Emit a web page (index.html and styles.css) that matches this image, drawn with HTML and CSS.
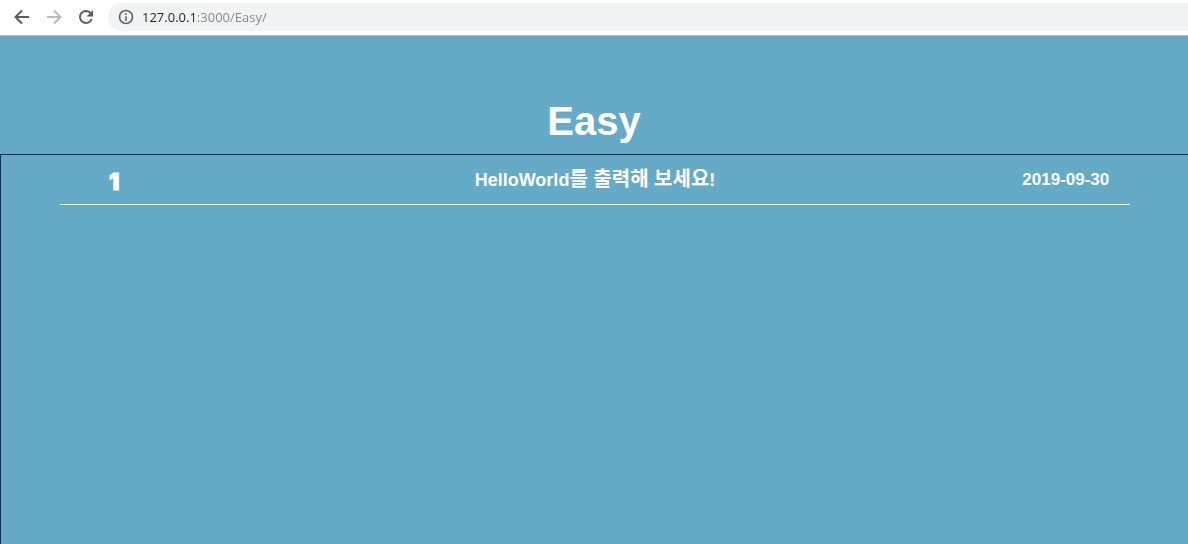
FILE: index.html
```html
<!DOCTYPE html>
<html lang="ko">
<head>
<meta charset="utf-8">
<title>Easy</title>
<link rel="stylesheet" href="styles.css">
</head>
<body>
<header class="toolbar">
  <button class="tool" type="button" aria-label="Back">
    <svg viewBox="0 0 16 16"><path d="M15 8H2M8 1.5 1.5 8 8 14.5"/></svg>
  </button>
  <button class="tool" type="button" aria-label="Forward" disabled>
    <svg viewBox="0 0 16 16"><path d="M1 8h13M8 1.5 14.5 8 8 14.5"/></svg>
  </button>
  <button class="tool" type="button" aria-label="Reload">
    <svg viewBox="0 0 16 16"><path d="M13.6 10A6 6 0 1 1 12.4 3.9L13.5 5"/><path class="solid" d="M15 1v6.5H8.5z"/></svg>
  </button>
  <div class="address">
    <svg class="info" viewBox="0 0 16 16"><circle cx="8" cy="8" r="6.5"/><path d="M8 7.2V12M8 4v1.8"/></svg>
    <input class="url" type="text" aria-label="Address" value="127.0.0.1:3000/Easy/">
  </div>
</header>
<main class="page">
  <h1 class="title">Easy</h1>
  <section class="board">
    <ul class="list">
      <li class="row">
        <span class="number">1</span>
        <span class="subject">HelloWorld<span class="hangul">를 출력해 보세요</span>!</span>
        <time class="date" datetime="2019-09-30">2019-09-30</time>
      </li>
    </ul>
  </section>
</main>
</body>
</html>
```
FILE: styles.css
```css
* {
  box-sizing: border-box;
}

body {
  margin: 0;
  min-height: 100vh;
  display: flex;
  flex-direction: column;
  background: #65abc8;
  color: #fff;
  font-family: "Liberation Sans", Arial, "Noto Sans CJK KR", sans-serif;
}

.toolbar {
  display: flex;
  align-items: center;
  gap: 16px;
  padding: 3px 0 4px 14px;
  background: #fff;
  border-bottom: 1px solid #b5b9bc;
}

.tool {
  display: flex;
  padding: 0;
  border: 0;
  background: none;
  color: #5a5e63;
}

.tool:disabled {
  color: #babcbe;
}

.tool svg,
.info {
  width: 16px;
  height: 16px;
  fill: none;
  stroke: currentColor;
  stroke-width: 2;
}

.tool .solid {
  fill: currentColor;
  stroke: none;
}

.address {
  flex: 1;
  display: flex;
  align-items: center;
  gap: 8px;
  height: 28px;
  margin-left: -2px;
  padding-left: 10px;
  border-radius: 14px 0 0 14px;
  background: #f1f3f4;
  color: #5f6368;
}

.info {
  stroke-width: 1.6;
}

.url {
  flex: 1;
  min-width: 0;
  padding: 0;
  border: 0;
  outline: 0;
  font: 13px/20px "Open Sans", "Noto Sans", sans-serif;
  /* host is dark, port and path are grey */
  background: linear-gradient(to right, #202124 54px, #80868b 54px);
  -webkit-background-clip: text;
  background-clip: text;
  color: transparent;
}

.page {
  flex: 1;
  display: flex;
  flex-direction: column;
}

.title {
  margin: 0;
  padding: 61px 0 9px;
  font-size: 40px;
  line-height: 48px;
  text-align: center;
}

.board {
  flex: 1;
  padding: 0 58px 0 59px;
  border: solid #212a48;
  border-width: 1px 0 0 1px;
}

.list {
  margin: 0;
  padding: 0;
  list-style: none;
}

.row {
  display: grid;
  grid-template-columns: 12% 1fr 12%;
  align-items: center;
  height: 50px;
  border-bottom: 1px solid #fff;
  font-weight: bold;
  text-align: center;
}

.number {
  font: 900 23px/28px Inter, sans-serif;
  padding: 4px 20px 0 0;
  -webkit-text-stroke: 1px #fff;
}

.subject {
  font-size: 18px;
  line-height: 24px;
}

.hangul {
  font-family: "Liberation Sans", "Noto Sans CJK KR", sans-serif;
  font-size: 20px;
}

.date {
  font-size: 17px;
  line-height: 24px;
  white-space: nowrap;
}
```
